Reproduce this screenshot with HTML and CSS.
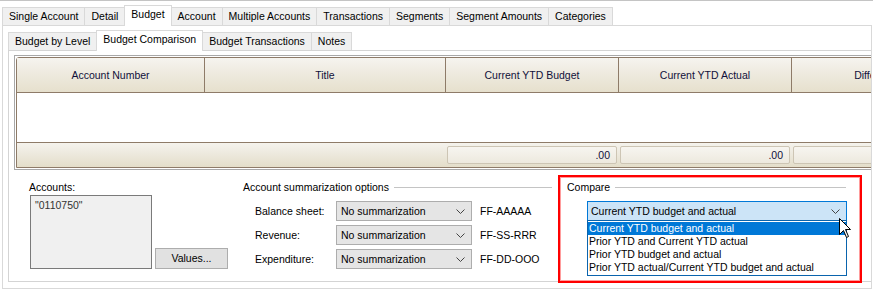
FILE: index.html
```html
<!DOCTYPE html>
<html lang="en">
<head>
    <meta charset="UTF-8">
    <title>Budget Comparison</title>
    <link rel="stylesheet" href="styles.css">
</head>
<body>
    <div class="window">
        <div class="tabstrip">
            <div class="tab">Single Account</div>
            <div class="tab">Detail</div>
            <div class="tab active">Budget</div>
            <div class="tab">Account</div>
            <div class="tab">Multiple Accounts</div>
            <div class="tab">Transactions</div>
            <div class="tab">Segments</div>
            <div class="tab">Segment Amounts</div>
            <div class="tab">Categories</div>
        </div>
        <div class="panel">
            <div class="tabstrip sub">
                <div class="tab">Budget by Level</div>
                <div class="tab active">Budget Comparison</div>
                <div class="tab">Budget Transactions</div>
                <div class="tab">Notes</div>
            </div>
            <div class="subpanel">
                <div class="grid">
                    <div class="grid-inner">
                        <div class="grid-head">
                            <div class="col col1">Account Number</div>
                            <div class="col col2">Title</div>
                            <div class="col col3">Current YTD Budget</div>
                            <div class="col col3">Current YTD Actual</div>
                            <div class="col col3">Difference</div>
                        </div>
                        <div class="grid-body"></div>
                        <div class="grid-foot">
                            <div class="foot-spacer"></div>
                            <div class="foot-cell"><div class="foot-box">.00</div></div>
                            <div class="foot-cell"><div class="foot-box">.00</div></div>
                            <div class="foot-cell"><div class="foot-box">.00</div></div>
                        </div>
                    </div>
                </div>

                <div class="options">
                    <div class="accounts">
                        <div class="label">Accounts:</div>
                        <div class="acc-row">
                            <div class="listbox">"0110750"</div>
                            <div class="btn">Values...</div>
                        </div>
                    </div>

                    <div class="summary">
                        <div class="group-title">Account summarization options</div>
                        <div class="sum-row first">
                            <span class="sum-label">Balance sheet:</span>
                            <div class="select">No summarization
                                <svg width="9" height="5" viewBox="0 0 9 5"><polyline points="0.5,0.5 4.5,4.5 8.5,0.5" fill="none" stroke="#444" stroke-width="1"/></svg>
                            </div>
                            <span class="code">FF-AAAAA</span>
                        </div>
                        <div class="sum-row">
                            <span class="sum-label">Revenue:</span>
                            <div class="select">No summarization
                                <svg width="9" height="5" viewBox="0 0 9 5"><polyline points="0.5,0.5 4.5,4.5 8.5,0.5" fill="none" stroke="#444" stroke-width="1"/></svg>
                            </div>
                            <span class="code">FF-SS-RRR</span>
                        </div>
                        <div class="sum-row">
                            <span class="sum-label">Expenditure:</span>
                            <div class="select">No summarization
                                <svg width="9" height="5" viewBox="0 0 9 5"><polyline points="0.5,0.5 4.5,4.5 8.5,0.5" fill="none" stroke="#444" stroke-width="1"/></svg>
                            </div>
                            <span class="code">FF-DD-OOO</span>
                        </div>
                    </div>

                    <div class="compare">
                        <div class="group-title">Compare</div>
                        <div class="compare-field">
                            <div class="select open">Current YTD budget and actual
                                <svg width="9" height="5" viewBox="0 0 9 5"><polyline points="0.5,0.5 4.5,4.5 8.5,0.5" fill="none" stroke="#444" stroke-width="1"/></svg>
                            </div>
                            <div class="droplist">
                                <div class="item selected">Current YTD budget and actual</div>
                                <div class="item">Prior YTD and Current YTD actual</div>
                                <div class="item">Prior YTD budget and actual</div>
                                <div class="item">Prior YTD actual/Current YTD budget and actual</div>
                            </div>
                        </div>
                        <svg class="cursor" width="13" height="21" viewBox="0 0 13 21">
                            <path d="M0.5,0.5 L0.5,16.5 L4.5,12.5 L7.5,19.5 L9.5,18.5 L6.5,11.5 L11.5,11.5 Z" fill="#fff" stroke="#000" stroke-width="1" stroke-linejoin="miter"/>
                        </svg>
                    </div>
                </div>
            </div>
        </div>
    </div>
</body>
</html>
```

FILE: styles.css
```css
* {
    box-sizing: border-box;
}
body {
    margin: 0;
    font-family: "Liberation Sans", Arial, sans-serif;
    font-size: 10.5px;
    color: #000;
    background-color: #fff;
}
.window {
    width: 873px;
    height: 290px;
    border-top: 1px solid #c4c4c4;
    overflow: hidden;
}

/* tabs */
.tabstrip {
    display: flex;
    align-items: flex-end;
    height: 24px;
    padding-left: 2px;
}
.tabstrip.sub {
    padding-left: 0;
}
.tab {
    height: 18px;
    line-height: 16px;
    padding: 0 6px;
    background-color: #f0f0f0;
    border: 1px solid #d9d9d9;
    border-bottom: none;
    margin-right: -1px;
    white-space: nowrap;
}
.tab.active {
    position: relative;
    z-index: 1;
    height: 21px;
    line-height: 17px;
    margin-bottom: -1px;
    background-color: #fff;
}
.panel {
    width: 870px;
    height: 264px;
    margin-left: 2px;
    padding-left: 5px;
    border: 1px solid #d9d9d9;
    overflow: hidden;
}
.subpanel {
    width: 1000px;
    height: 232px;
    padding: 4px 0 0 5px;
    border: 1px solid #d4d4d4;
}

/* grid */
.grid {
    width: 990px;
    padding: 1px;
    border: 1px solid #a8a8a8;
}
.grid-inner {
    border: 1px solid #8e7b68;
    border-top-left-radius: 3px;
}
.grid-head {
    display: flex;
    height: 35px;
    border-bottom: 1px solid #8e7b68;
    background: linear-gradient(#f6f4ef, #eeeadf 45%, #e6e0cd);
}
.col {
    flex: none;
    display: flex;
    align-items: center;
    justify-content: center;
    border-right: 1px solid #8e7b68;
    color: #10103a;
}
.col1 {
    width: 188px;
}
.col2 {
    width: 241px;
}
.col3 {
    width: 173px;
}
.grid-body {
    height: 49px;
    background-color: #fff;
}
.grid-foot {
    display: flex;
    height: 25px;
    border-top: 1px solid #8e7b68;
    background: linear-gradient(#f5f3ed, #ece8dc 50%, #e4deca);
}
.foot-spacer {
    flex: none;
    width: 429px;
}
.foot-cell {
    flex: none;
    width: 173px;
    padding: 3px 2px 0 1px;
}
.foot-box {
    height: 18px;
    line-height: 16px;
    padding-right: 6px;
    text-align: right;
    color: #10103a;
    border: 1px solid #cdc5b4;
    border-radius: 2px;
    background: linear-gradient(#f7f5f0, #ede9de);
}

/* options */
.options {
    display: flex;
    align-items: flex-start;
    padding-left: 15px;
}
.label,
.group-title {
    line-height: 13px;
}
.accounts {
    padding-top: 11px;
}
.acc-row {
    display: flex;
    align-items: flex-end;
    margin-top: 1px;
}
.listbox {
    width: 122px;
    height: 74px;
    margin-left: 1px;
    padding: 3px 4px;
    color: #333;
    background-color: #f0f0f0;
    border: 1px solid #7a7a7a;
}
.btn {
    width: 73px;
    height: 21px;
    margin-left: 3px;
    line-height: 19px;
    text-align: center;
    background-color: #e1e1e1;
    border: 1px solid #adadad;
}
.summary {
    width: 309px;
    margin-left: 15px;
    padding-top: 11px;
}
.group-title {
    display: flex;
    align-items: center;
}
.group-title::after {
    content: "";
    flex: 1;
    margin-left: 5px;
    border-top: 1px solid #c4c4c4;
}
.sum-row {
    display: flex;
    align-items: center;
    height: 20px;
    margin-top: 4px;
    padding-left: 12px;
}
.sum-row.first {
    margin-top: 7px;
}
.sum-label {
    width: 81px;
}
.select {
    display: flex;
    align-items: center;
    justify-content: space-between;
    width: 136px;
    height: 20px;
    padding: 0 6px 0 4px;
    background-color: #e5e5e5;
    border: 1px solid #adadad;
}
.code {
    margin-left: 8px;
}

/* compare */
.compare {
    position: relative;
    width: 304px;
    height: 108px;
    margin: 5px 0 0 6px;
    padding: 4px 14px 0 7px;
    border: 2px solid #ff0000;
    box-shadow: inset 0 0 0 1px #ff9c9c;
}
.compare-field {
    position: relative;
    width: 260px;
    margin: 7px 0 0 20px;
}
.select.open {
    width: 260px;
    height: 20px;
    padding: 0 6px 0 3px;
    background-color: #cce4f7;
    border-color: #0078d7;
}
.droplist {
    position: absolute;
    top: 19px;
    left: 0;
    width: 260px;
    height: 56px;
    padding-top: 1px;
    background-color: #fff;
    border: 1px solid #0a64ad;
}
.item {
    height: 13px;
    line-height: 13px;
    padding-left: 1px;
    white-space: nowrap;
}
.item.selected {
    color: #fff;
    background-color: #0078d7;
}
.cursor {
    position: absolute;
    left: 279px;
    top: 41px;
}
```
